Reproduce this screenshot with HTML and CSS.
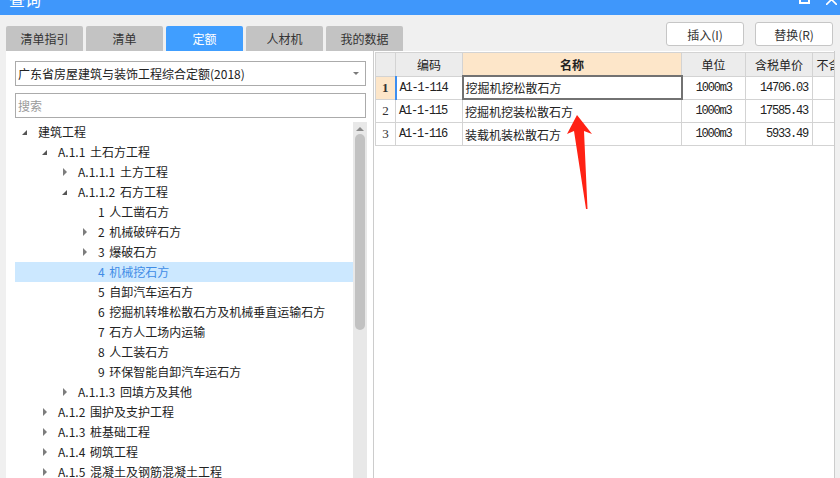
FILE: index.html
```html
<!DOCTYPE html>
<html lang="zh-CN">
<head>
    <meta charset="UTF-8">
    <title>查询</title>
    <link rel="stylesheet" href="styles.css">
</head>
<body>
    <div class="titlebar">
        <span class="title">查询</span>
        <svg class="win-btn max" width="11" height="5" viewBox="0 0 11 5">
            <rect x="1" y="-6" width="9" height="9" fill="none" stroke="#fff" stroke-width="2"/>
        </svg>
        <svg class="win-btn close" width="11" height="5" viewBox="0 0 11 5">
            <path d="M0 -6 L11 5 M11 -6 L0 5" stroke="#fff" stroke-width="1.6"/>
        </svg>
    </div>

    <div class="toolbar">
        <div class="tabs">
            <div class="tab">清单指引</div>
            <div class="tab">清单</div>
            <div class="tab active">定额</div>
            <div class="tab">人材机</div>
            <div class="tab">我的数据</div>
        </div>
        <div class="actions">
            <button class="btn">插入(I)</button>
            <button class="btn">替换(R)</button>
        </div>
    </div>

    <div class="content">
        <div class="left">
            <div class="select">
                <span>广东省房屋建筑与装饰工程综合定额(2018)</span>
                <span class="caret"></span>
            </div>
            <input class="search" type="text" placeholder="搜索">
            <div class="tree-wrap">
                <ul class="tree">
                    <li class="lv0 open"><i></i>建筑工程</li>
                    <li class="lv1 open"><i></i>A.1.1 土石方工程</li>
                    <li class="lv2 closed"><i></i>A.1.1.1 土方工程</li>
                    <li class="lv2 open"><i></i>A.1.1.2 石方工程</li>
                    <li class="lv3"><i></i>1 人工凿石方</li>
                    <li class="lv3 closed"><i></i>2 机械破碎石方</li>
                    <li class="lv3 closed"><i></i>3 爆破石方</li>
                    <li class="lv3 selected"><i></i>4 机械挖石方</li>
                    <li class="lv3"><i></i>5 自卸汽车运石方</li>
                    <li class="lv3"><i></i>6 挖掘机转堆松散石方及机械垂直运输石方</li>
                    <li class="lv3"><i></i>7 石方人工场内运输</li>
                    <li class="lv3"><i></i>8 人工装石方</li>
                    <li class="lv3"><i></i>9 环保智能自卸汽车运石方</li>
                    <li class="lv2 closed"><i></i>A.1.1.3 回填方及其他</li>
                    <li class="lv1 closed"><i></i>A.1.2 围护及支护工程</li>
                    <li class="lv1 closed"><i></i>A.1.3 桩基础工程</li>
                    <li class="lv1 closed"><i></i>A.1.4 砌筑工程</li>
                    <li class="lv1 closed"><i></i>A.1.5 混凝土及钢筋混凝土工程</li>
                </ul>
                <div class="scrollbar">
                    <span class="up"></span>
                    <span class="thumb"></span>
                </div>
            </div>
        </div>

        <div class="right">
            <table class="grid">
                <colgroup>
                    <col class="c-no">
                    <col class="c-code">
                    <col class="c-name">
                    <col class="c-unit">
                    <col class="c-price">
                    <col class="c-price2">
                </colgroup>
                <thead>
                    <tr>
                        <th></th>
                        <th>编码</th>
                        <th class="hl">名称</th>
                        <th>单位</th>
                        <th>含税单价</th>
                        <th>不含税单价</th>
                    </tr>
                </thead>
                <tbody>
                    <tr class="current">
                        <td class="no">1</td>
                        <td class="code">A1-1-114</td>
                        <td class="name">挖掘机挖松散石方</td>
                        <td class="unit">1000m3</td>
                        <td class="price">14706.03</td>
                        <td></td>
                    </tr>
                    <tr>
                        <td class="no">2</td>
                        <td class="code">A1-1-115</td>
                        <td class="name">挖掘机挖装松散石方</td>
                        <td class="unit">1000m3</td>
                        <td class="price">17585.43</td>
                        <td></td>
                    </tr>
                    <tr>
                        <td class="no">3</td>
                        <td class="code">A1-1-116</td>
                        <td class="name">装载机装松散石方</td>
                        <td class="unit">1000m3</td>
                        <td class="price">5933.49</td>
                        <td></td>
                    </tr>
                </tbody>
            </table>

            <!-- 标注箭头 -->
            <svg class="arrow" width="40" height="105" viewBox="560 110 40 105">
                <polygon points="577,115 592,134 584,131 587.5,209 586,209 574,131 567,134" fill="#ff2214"/>
            </svg>
        </div>
    </div>
</body>
</html>
```

FILE: styles.css
```css
body {
    margin: 0;
    width: 840px;
    height: 478px;
    overflow: hidden;
    background: #f0f0f0;
    font-family: "Noto Sans CJK SC", "Liberation Sans", sans-serif;
    font-size: 12px;
    color: #222;
}

.titlebar {
    height: 15px;
    background: #3f97fb;
    display: flex;
    align-items: flex-start;
    overflow: hidden;
    padding: 0 3px 0 9px;
}

.title {
    display: block;
    color: #fff;
    font-size: 16px;
    line-height: 16px;
    margin-top: -9px;
}

.win-btn {
    display: block;
}

.win-btn.max {
    margin-left: auto;
    margin-right: 16px;
}

.toolbar {
    height: 36px;
    display: flex;
    padding-left: 6px;
    padding-right: 7px;
}

.tabs {
    display: flex;
    gap: 3px;
    align-self: flex-end;
}

.tab {
    width: 77px;
    height: 25px;
    line-height: 25px;
    text-align: center;
    background: #c3c3c3;
    color: #333;
    border-radius: 2px 2px 0 0;
}

.tab.active {
    background: #409eff;
    color: #fff;
}

.actions {
    margin-left: auto;
    display: flex;
    gap: 11px;
    padding-top: 7px;
}

.btn {
    width: 78px;
    height: 24px;
    background: #fff;
    border: 1px solid #c6c6c6;
    border-radius: 3px;
    font-family: inherit;
    font-size: 12px;
    color: #333;
    padding: 0;
}

.content {
    display: flex;
    height: 427px;
    margin-left: 6px;
}

.left {
    width: 367px;
    background: #fff;
    border-right: 1px solid #cccccc;
    overflow: hidden;
}

.select {
    margin: 10px 0 0 9px;
    height: 23px;
    border: 1px solid #ababab;
    display: flex;
    align-items: center;
    padding-left: 2px;
    width: 347px;
}

.caret {
    margin-left: auto;
    margin-right: 6px;
    width: 0;
    height: 0;
    border-left: 3px solid transparent;
    border-right: 3px solid transparent;
    border-top: 3px solid #7a7a7a;
}

.search {
    display: block;
    margin: 7px 0 0 9px;
    width: 351px;
    height: 25px;
    box-sizing: border-box;
    border: 1px solid #ababab;
    padding: 0 2px;
    font-family: inherit;
    font-size: 12px;
    outline: none;
}

.search::placeholder {
    color: #9a9a9a;
}

.tree-wrap {
    display: flex;
    margin: 4px 0 0 9px;
    height: 305px;
}

.tree {
    list-style: none;
    margin: 0;
    padding: 0;
    width: 338px;
    word-spacing: 2px;
}

.tree li {
    height: 20px;
    line-height: 20px;
    display: flex;
    align-items: center;
    white-space: pre;
}

.tree li i {
    width: 12px;
    height: 20px;
    margin-right: 7px;
    position: relative;
    flex: none;
}

.tree .lv0 { padding-left: 4px; }
.tree .lv1 { padding-left: 24px; }
.tree .lv2 { padding-left: 44px; }
.tree .lv3 { padding-left: 64px; }

.tree .open i::after {
    content: "";
    position: absolute;
    left: 3px;
    top: 8px;
    border-left: 5px solid transparent;
    border-bottom: 5px solid #555;
}

.tree .closed i::after {
    content: "";
    position: absolute;
    left: 4px;
    top: 6px;
    border-top: 4px solid transparent;
    border-bottom: 4px solid transparent;
    border-left: 4px solid #7d7d7d;
}

.tree li.selected {
    background: #cce8ff;
    color: #3f8ce6;
}

.scrollbar {
    width: 14px;
    height: 356px;
    background: #e8e8e8;
    flex: none;
    display: flex;
    flex-direction: column;
    align-items: center;
}

.scrollbar .up {
    margin-top: 5px;
    width: 0;
    height: 0;
    border-left: 4px solid transparent;
    border-right: 4px solid transparent;
    border-bottom: 4px solid #8a8a8a;
}

.scrollbar .thumb {
    margin-top: 3px;
    width: 10px;
    height: 196px;
    border-radius: 5px;
    background: #c2c2c2;
}

.right {
    position: relative;
    width: 461px;
    background: #fff;
    border-right: 1px solid #cccccc;
    overflow: hidden;
    padding: 1px 0 0 1px;
    box-sizing: border-box;
}

.grid {
    border-collapse: collapse;
    table-layout: fixed;
    width: 505px;
}

.c-no { width: 20px; }
.c-code { width: 67px; }
.c-name { width: 219px; }
.c-unit { width: 64px; }
.c-price { width: 67px; }
.c-price2 { width: 68px; }

.grid th,
.grid td {
    border: 1px solid #d3d3d3;
    height: 22px;
    padding: 0;
    white-space: nowrap;
    overflow: hidden;
}

.grid tr.current td {
    height: 21px;
}

.grid th {
    background: #ececec;
    font-weight: normal;
    color: #222;
    text-align: center;
}

.grid th.hl {
    background: #fde6c9;
    font-weight: bold;
}

.grid td.no {
    text-align: center;
    font-family: "Liberation Serif", serif;
    font-size: 13px;
    color: #333;
}

.grid td.code,
.grid td.unit,
.grid td.price {
    font-family: "Liberation Mono", monospace;
    font-size: 12px;
    letter-spacing: -1.2px;
}

.grid td.code {
    padding-left: 3px;
}

.grid td.name {
    padding-left: 2px;
}

.grid td.unit {
    text-align: center;
}

.grid td.price {
    text-align: right;
    padding-right: 4px;
}

.grid tr.current td.no {
    background: #fde6c9;
    font-weight: bold;
}

.grid tr.current td.code {
    border-left: 2px solid #3d8ef0;
}

.grid tr.current td.name {
    border: 2px solid #727272;
}

.arrow {
    position: absolute;
    left: 186px;
    top: 59px;
}
```
